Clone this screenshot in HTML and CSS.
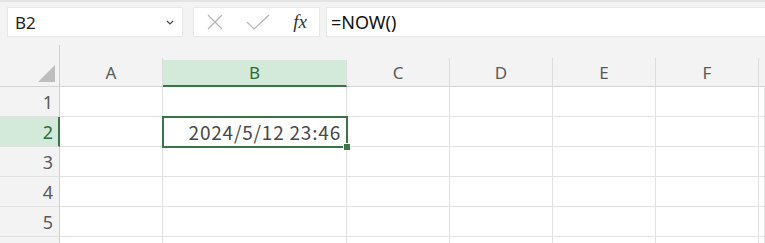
FILE: index.html
```html
<!DOCTYPE html>
<html lang="ja">
<head>
    <meta charset="UTF-8">
    <title>NOW</title>
    <link rel="stylesheet" href="styles.css">
</head>
<body>
    <div class="toolbar">
        <div class="namebox">
            <span>B2</span>
            <svg class="chevron" width="8" height="5" viewBox="0 0 8 5"><path d="M1 1 L4 4 L7 1" fill="none" stroke="#444" stroke-width="1.2"/></svg>
        </div>
        <div class="fx-buttons">
            <svg width="16" height="16" viewBox="0 0 16 16"><path d="M1 1 L15 15 M15 1 L1 15" stroke="#b4b4b4" stroke-width="1.2"/></svg>
            <svg width="24" height="16" viewBox="0 0 24 16"><path d="M1 8 L8 15 L23 1" fill="none" stroke="#b4b4b4" stroke-width="1.2"/></svg>
            <span class="fx">fx</span>
        </div>
        <div class="formula">=NOW()</div>
    </div>

    <div class="sheet">
        <div class="corner"><span class="tri"></span></div>
        <div class="col-h">A</div>
        <div class="col-h active">B</div>
        <div class="col-h">C</div>
        <div class="col-h">D</div>
        <div class="col-h">E</div>
        <div class="col-h">F</div>
        <div class="col-h last"></div>

        <div class="row-h">1</div>
        <div class="cell"></div><div class="cell"></div><div class="cell"></div><div class="cell"></div><div class="cell"></div><div class="cell"></div><div class="cell"></div>

        <div class="row-h active">2</div>
        <div class="cell"></div>
        <div class="cell selected">
            2024/5/12 23:46
            <span class="sel-box"><span class="handle"></span></span>
        </div>
        <div class="cell"></div><div class="cell"></div><div class="cell"></div><div class="cell"></div><div class="cell"></div>

        <div class="row-h">3</div>
        <div class="cell"></div><div class="cell"></div><div class="cell"></div><div class="cell"></div><div class="cell"></div><div class="cell"></div><div class="cell"></div>

        <div class="row-h">4</div>
        <div class="cell"></div><div class="cell"></div><div class="cell"></div><div class="cell"></div><div class="cell"></div><div class="cell"></div><div class="cell"></div>

        <div class="row-h">5</div>
        <div class="cell"></div><div class="cell"></div><div class="cell"></div><div class="cell"></div><div class="cell"></div><div class="cell"></div><div class="cell"></div>

        <!-- row 6 is only partly in view -->
        <div class="row-h"></div>
        <div class="cell"></div><div class="cell"></div><div class="cell"></div><div class="cell"></div><div class="cell"></div><div class="cell"></div><div class="cell"></div>
    </div>
</body>
</html>
```

FILE: styles.css
```css
body {
    margin: 0;
    background: #f3f3f3;
    font-family: 'Noto Sans', 'Noto Sans CJK JP', sans-serif;
    color: #222;
    overflow: hidden;
}

/* formula bar */
.toolbar {
    display: flex;
    height: 40px;
    padding: 5px 0 3px 7px;
    box-sizing: border-box;
    border-top: 2px solid #e4e4e4;
}

.namebox,
.fx-buttons,
.formula {
    background: #fff;
    border: 1px solid #e8e8e8;
    box-sizing: border-box;
    display: flex;
    align-items: center;
}

.namebox {
    width: 176px;
    padding: 0 8px 0 7px;
    justify-content: space-between;
    font-size: 17px;
}

.fx-buttons {
    width: 127px;
    margin-left: 10px;
    padding: 0 12px 0 13px;
    justify-content: space-between;
}

.fx {
    font-family: 'Liberation Serif', serif;
    font-style: italic;
    font-size: 19px;
    color: #333;
}

.formula {
    flex: 1;
    margin-left: 6px;
    padding-left: 4px;
    font-size: 18px;
    color: #111;
    border-right: none;
}

/* grid */
.sheet {
    display: grid;
    grid-template-columns: 60px 103px 184px 103px 103px 103px 103px 1fr;
    grid-template-rows: 47px repeat(6, 30px);
}

.corner {
    align-self: end;
    height: 42px;
    border-right: 1px solid #cfcfcf;
    border-bottom: 1px solid #d4d4d4;
    box-sizing: border-box;
    display: flex;
    justify-content: flex-end;
    align-items: flex-end;
    padding: 0 4px 4px 0;
}

.tri {
    width: 0;
    height: 0;
    border-left: 17px solid transparent;
    border-bottom: 17px solid #bdbdbd;
}

.col-h {
    align-self: end;
    height: 29px;
    border-right: 1px solid #dcdcdc;
    border-bottom: 1px solid #d4d4d4;
    box-sizing: border-box;
    display: flex;
    justify-content: center;
    align-items: center;
    font-size: 17px;
    color: #5a5a5a;
}

.col-h.active {
    height: 27px;
    background: #d3eadb;
    border-bottom: 2px solid #3a7446;
    color: #2f6b3d;
}

.col-h.last {
    border-right: none;
}

.row-h {
    border-right: 1px solid #cfcfcf;
    border-bottom: 1px solid #e0e0e0;
    box-sizing: border-box;
    display: flex;
    justify-content: flex-end;
    align-items: center;
    padding-right: 6px;
    font-size: 18px;
    color: #5a5a5a;
}

.row-h.active {
    background: #d3eadb;
    border-right: 2px solid #3a7446;
    padding-right: 5px;
    color: #2f6b3d;
}

.cell {
    background: #fff;
    border-right: 1px solid #e2e2e2;
    border-bottom: 1px solid #e2e2e2;
    box-sizing: border-box;
}

.cell.selected {
    position: relative;
    display: flex;
    justify-content: flex-end;
    align-items: center;
    padding-right: 5px;
    font-family: 'Noto Sans CJK JP', sans-serif;
    font-size: 19px;
    letter-spacing: 0.8px;
    color: #484848;
}

.sel-box {
    position: absolute;
    left: -1px;
    top: -1px;
    right: -2px;
    bottom: -2px;
    border: 2px solid #3a7446;
}

.handle {
    position: absolute;
    right: -5px;
    bottom: -5px;
    width: 6px;
    height: 6px;
    background: #3a7446;
    border: 1px solid #fff;
}
```
